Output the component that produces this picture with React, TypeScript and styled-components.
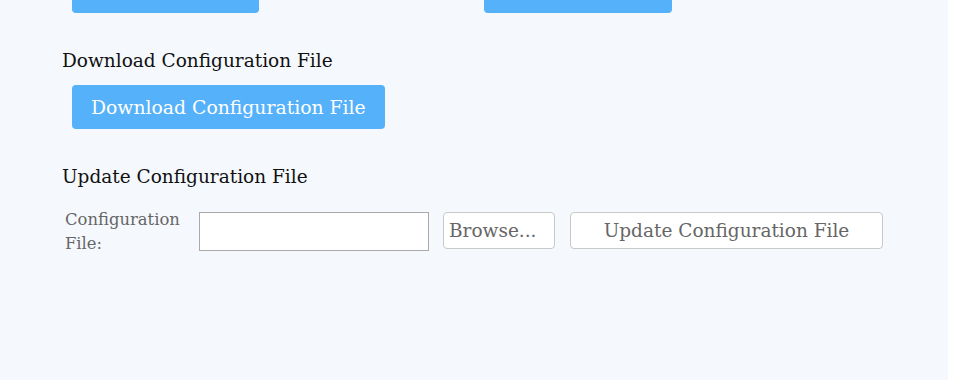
import React from "react";
import styled, { createGlobalStyle } from "styled-components";

const GlobalStyle = createGlobalStyle`
  html, body {
    margin: 0;
    padding: 0;
    background: #ffffff;
  }
  body {
    font-family: "DejaVu Serif", "Liberation Serif", serif;
  }
`;

const Page = styled.div`
  width: 948px;
  height: 380px;
  background: #f5f8fd;
  overflow: hidden;
  padding: 0 0 0 62px;
  box-sizing: border-box;
`;

const TopRow = styled.div`
  display: flex;
  gap: 225px;
  margin-top: -31px;
  padding-left: 10px;
`;

const BlueButton = styled.button<{ $width?: number }>`
  width: ${(p) => (p.$width ? `${p.$width}px` : "auto")};
  height: 44px;
  padding: 1px 19px 0;
  border: none;
  border-radius: 4px;
  background: #55b1f9;
  color: #ffffff;
  font-family: "DejaVu Serif", "Liberation Serif", serif;
  font-size: 18.8px;
  white-space: nowrap;
  cursor: pointer;
`;

const Heading = styled.div<{ $top: number }>`
  margin-top: ${(p) => p.$top}px;
  height: 24px;
  line-height: 25px;
  font-size: 18.5px;
  color: #111111;
  white-space: nowrap;
`;

const ActionWrap = styled.div`
  margin-top: 13px;
  padding-left: 10px;
`;

const FormRow = styled.div`
  display: flex;
  align-items: flex-start;
  margin-top: 24px;
  padding-left: 3px;
`;

const Label = styled.label`
  width: 134px;
  font-size: 16.4px;
  line-height: 24px;
  color: #666666;
  margin-top: -4px;
`;

const FileInput = styled.div`
  width: 230px;
  height: 39px;
  box-sizing: border-box;
  border: 1px solid #a9a9a9;
  background: #ffffff;
`;

const GreyButton = styled.button<{ $width: number; $gap: number }>`
  width: ${(p) => p.$width}px;
  height: 37px;
  margin-left: ${(p) => p.$gap}px;
  box-sizing: border-box;
  border: 1px solid #c8c8c8;
  border-radius: 4px;
  background: #ffffff;
  color: #666666;
  font-family: "DejaVu Serif", "Liberation Serif", serif;
  font-size: 18.5px;
  padding: 0 5px;
  white-space: nowrap;
`;

const BrowseButton = styled(GreyButton)`
  text-align: left;
`;

export default function App() {
  return (
    <>
      <GlobalStyle />
      <Page>
        <TopRow>
          <BlueButton $width={187} />
          <BlueButton $width={188} />
        </TopRow>
        <Heading $top={35}>Download Configuration File</Heading>
        <ActionWrap>
          <BlueButton>Download Configuration File</BlueButton>
        </ActionWrap>
        <Heading $top={35}>Update Configuration File</Heading>
        <FormRow>
          <Label>
            Configuration
            <br />
            File:
          </Label>
          <FileInput />
          <BrowseButton $width={112} $gap={14}>
            Browse...
          </BrowseButton>
          <GreyButton $width={313} $gap={15}>
            Update Configuration File
          </GreyButton>
        </FormRow>
      </Page>
    </>
  );
}
